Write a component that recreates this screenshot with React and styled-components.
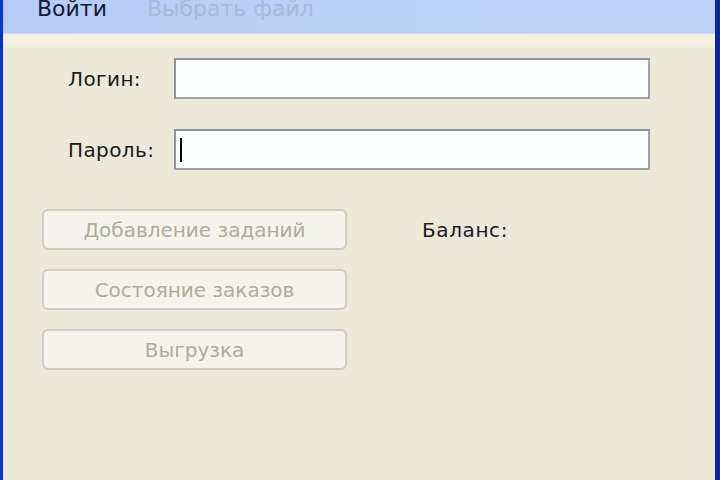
import styled, { createGlobalStyle } from 'styled-components'

const GlobalStyle = createGlobalStyle`
    html, body {
        margin: 0;
        padding: 0;
        background: #ece9d8;
    }
    body {
        font-family: "DejaVu Sans", "Liberation Sans", sans-serif;
    }
`

const Window = styled.div`
    display: flex;
    flex-direction: column;
    height: 480px;
    width: 720px;
    box-sizing: border-box;
    overflow: hidden;
    background: #ece9d8;
    border-left: 3px solid #0733d6;
    border-right: 5px solid #0a259f;
    box-shadow: inset 3px 0 0 #1f5ff0, inset 5px 0 0 #9dbcf5, inset -2px 0 0 #2a55d0;
`

const MenuBar = styled.div`
    display: flex;
    align-items: flex-start;
    height: 33px;
    flex-shrink: 0;
    padding-left: 34px;
    background: linear-gradient(to right, #b6ccf5, #bbd2f7 60%, #bed4f8);
    border-bottom: 1px solid #cddcf3;
`

const MenuItem = styled.span`
    font-size: 22px;
    line-height: 22px;
    margin-top: -2px;
    margin-right: 40px;
    color: ${(p) => (p.disabled ? '#a9bad6' : '#0e1a33')};
`

const Body = styled.div`
    flex: 1;
    display: flex;
    flex-direction: column;
    background: linear-gradient(to bottom, #f4f0e2 0px, #f2eee0 13px, #ece9d8 14px);
    padding-top: 24px;
`

const Form = styled.div`
    display: grid;
    grid-template-columns: 106px 476px;
    row-gap: 30px;
    margin-left: 65px;
    align-items: center;
`

const Label = styled.label`
    font-size: 20px;
    letter-spacing: 0.4px;
    color: #1a1a1a;
`

const Input = styled.div`
    height: 41px;
    box-sizing: border-box;
    background: #fdfefe;
    border: 2px solid #8d9398;
    border-right-color: #9ea3a7;
    border-bottom-color: #9ea3a7;
    display: flex;
    align-items: center;
    padding-left: 4px;
`

const Caret = styled.span`
    width: 2px;
    height: 24px;
    background: #000;
`

const Lower = styled.div`
    display: flex;
    align-items: flex-start;
    margin-top: 39px;
    padding-left: 39px;
`

const ButtonColumn = styled.div`
    display: flex;
    flex-direction: column;
    gap: 19px;
    width: 305px;
`

const Button = styled.button`
    height: 41px;
    box-sizing: border-box;
    border: 2px solid #d0cdbf;
    border-radius: 6px;
    background: #f5f4ec;
    color: #aeac9d;
    font-family: "DejaVu Sans", "Liberation Sans", sans-serif;
    font-size: 20px;
    padding: 0;
    cursor: default;
`

const Balance = styled.div`
    height: 41px;
    display: flex;
    align-items: center;
    margin-left: 75px;
    font-size: 20px;
    letter-spacing: 0.6px;
    color: #1a1a1a;
`

const App = () => {
    return (
        <>
            <GlobalStyle />
            <Window>
                <MenuBar>
                    <MenuItem>Войти</MenuItem>
                    <MenuItem disabled>Выбрать файл</MenuItem>
                </MenuBar>
                <Body>
                    <Form>
                        <Label>Логин:</Label>
                        <Input />
                        <Label>Пароль:</Label>
                        <Input>
                            <Caret />
                        </Input>
                    </Form>
                    <Lower>
                        <ButtonColumn>
                            <Button disabled>Добавление заданий</Button>
                            <Button disabled>Состояние заказов</Button>
                            <Button disabled>Выгрузка</Button>
                        </ButtonColumn>
                        <Balance>Баланс:</Balance>
                    </Lower>
                </Body>
            </Window>
        </>
    )
}

export default App
